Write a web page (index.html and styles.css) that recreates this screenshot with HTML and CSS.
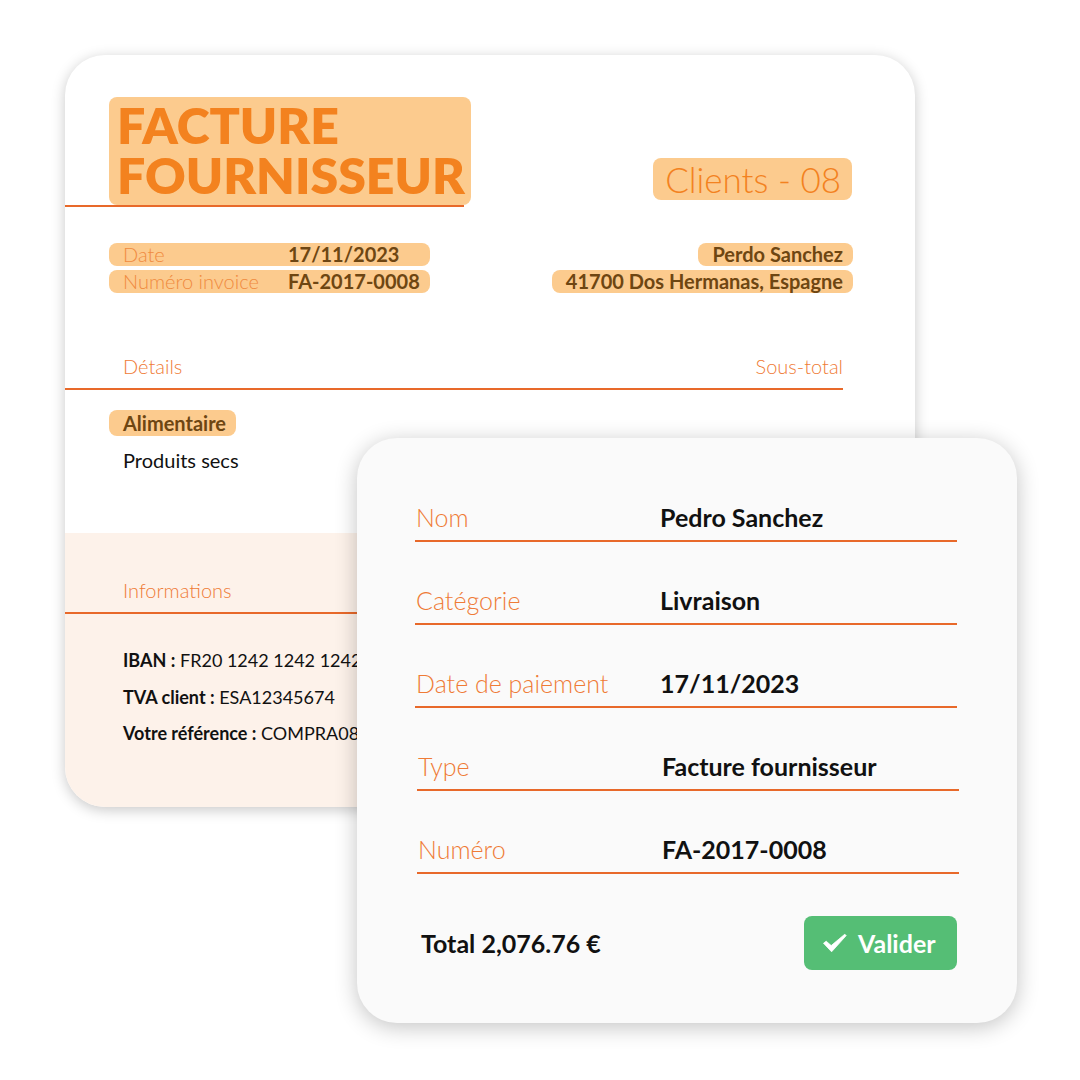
FILE: index.html
```html
<!DOCTYPE html>
<html lang="fr">
<head>
<meta charset="utf-8">
<title>Facture fournisseur</title>
<link rel="stylesheet" href="styles.css">
</head>
<body>
<div class="stage">
  <section class="doc">
    <div class="doc-top">
      <div class="head">
        <div class="title-wrap">
          <h1 class="title">FACTURE<br>FOURNISSEUR</h1>
        </div>
        <div class="clients">Clients - 08</div>
      </div>
      <div class="meta">
        <div class="meta-left">
          <div class="pill pill-kv"><span class="k">Date</span><span class="v">17/11/2023</span></div>
          <div class="pill pill-kv"><span class="k">Numéro invoice</span><span class="v">FA-2017-0008</span></div>
        </div>
        <div class="meta-right">
          <div class="pill pill-b">Perdo Sanchez</div>
          <div class="pill pill-b">41700 Dos Hermanas, Espagne</div>
        </div>
      </div>
      <div class="sec-head">
        <span>Détails</span><span>Sous-total</span>
      </div>
      <div class="cat"><span class="pill pill-b pill-tall">Alimentaire</span></div>
      <div class="item">Produits secs</div>
    </div>
    <div class="doc-bottom">
      <div class="sec-head"><span>Informations</span></div>
      <ul class="info">
        <li><b>IBAN :</b> FR20 1242 1242 1242 1242</li>
        <li><b>TVA client :</b> ESA12345674</li>
        <li><b>Votre référence :</b> COMPRA08</li>
      </ul>
    </div>
  </section>

  <section class="form">
    <div class="row"><span class="lbl">Nom</span><span class="val">Pedro Sanchez</span></div>
    <div class="row"><span class="lbl">Catégorie</span><span class="val">Livraison</span></div>
    <div class="row"><span class="lbl">Date de paiement</span><span class="val">17/11/2023</span></div>
    <div class="row row-shift"><span class="lbl">Type</span><span class="val">Facture fournisseur</span></div>
    <div class="row row-shift"><span class="lbl">Numéro</span><span class="val">FA-2017-0008</span></div>
    <div class="foot">
      <span class="total">Total 2,076.76 €</span>
      <button class="btn" type="button">
        <svg class="check" width="24" height="20" viewBox="0 0 24 20" aria-hidden="true"><path d="M0.5 10.2 L3.2 8.2 L8.2 12.6 L21.8 1.2 L23.2 2.6 L8.6 18.8 Z" fill="#ffffff" stroke="#ffffff" stroke-width="0.8" stroke-linejoin="round"/></svg>
        Valider
      </button>
    </div>
  </section>
</div>
</body>
</html>
```
FILE: styles.css
```css
* { box-sizing: border-box; }
html, body { margin: 0; padding: 0; background: #ffffff; }
body {
  font-family: Lato, "Open Sans", "Liberation Sans", sans-serif;
  width: 1080px;
  height: 1080px;
  overflow: hidden;
}
.stage {
  position: relative;
  width: 1080px;
  height: 1080px;
  padding: 55px 0 0 65px;
}

/* Back document */
.doc {
  width: 850px;
  height: 752px;
  border-radius: 40px;
  overflow: hidden;
  background: #ffffff;
  box-shadow: 0 3px 14px rgba(0, 0, 0, 0.22);
  display: flex;
  flex-direction: column;
}
.doc-top {
  padding: 42px 72px 0 0;
  height: 478px;
}
.head {
  display: flex;
  justify-content: space-between;
  align-items: flex-end;
}
.title-wrap {
  width: 399px;
  padding-left: 44px;
  border-bottom: 2px solid #e8692a;
}
.title {
  margin: 0;
  width: 362px;
  padding: 3px 0 5px 8px;
  background: #fccb8e;
  border-radius: 8px;
  color: #f3821f;
  font-weight: 800;
  font-size: 50px;
  line-height: 50px;
  letter-spacing: 0;
}
.clients {
  margin: 0 -9px 7px 0;
  background: #fccb8e;
  border-radius: 8px;
  padding: 0 11px 0 12px;
  height: 42px;
  line-height: 42px;
  font-size: 35px;
  font-weight: 300;
  color: #f3821f;
}
.meta {
  margin-top: 36px;
  padding-left: 44px;
  display: flex;
  justify-content: space-between;
  margin-right: -10px;
}
.meta-left, .meta-right {
  display: flex;
  flex-direction: column;
  gap: 4px;
}
.meta-right { align-items: flex-end; }
.pill {
  background: #fccb8e;
  border-radius: 8px;
  height: 23px;
  line-height: 23px;
  font-size: 20px;
}
.pill-kv {
  width: 321px;
  display: grid;
  grid-template-columns: 165px 1fr;
  padding-left: 14px;
}
.pill-kv .k { color: #f08a3e; font-weight: 300; }
.pill-kv .v { color: #6e4612; font-weight: 700; }
.pill-b {
  color: #6e4612;
  font-weight: 700;
  padding: 0 10px 0 14px;
}
.pill-tall {
  display: inline-block;
  height: 26px;
  line-height: 26px;
}
.sec-head {
  margin-top: 62px;
  width: 778px;
  display: flex;
  justify-content: space-between;
  padding: 0 0 10px 58px;
  border-bottom: 2px solid #e8692a;
  color: #ef7b36;
  font-weight: 300;
  font-size: 20px;
  line-height: 23px;
}
.cat {
  margin-top: 20px;
  padding-left: 44px;
  height: 26px;
}
.item {
  margin-top: 13px;
  padding-left: 58px;
  font-size: 20px;
  line-height: 22px;
  color: #111111;
}
.doc-bottom {
  flex: 1;
  background: #fdf2ea;
  padding-top: 46px;
}
.doc-bottom .sec-head { margin-top: 0; }
.info {
  list-style: none;
  margin: 28px 0 0;
  padding: 0 0 0 58px;
  font-size: 18px;
  line-height: 36.5px;
  color: #111111;
}
.info b { font-weight: 700; }

/* Front form card (overlaps the document) */
.form {
  position: absolute;
  left: 357px;
  top: 438px;
  width: 660px;
  height: 585px;
  border-radius: 40px;
  background: #fafafa;
  box-shadow: 0 4px 22px rgba(0, 0, 0, 0.24);
  padding: 64px 60px 0 58px;
}
.row {
  display: flex;
  align-items: baseline;
  height: 40px;
  padding: 0 0 8px 1px;
  border-bottom: 2px solid #e8692a;
  margin-bottom: 43px;
  font-size: 25px;
  line-height: 30px;
}
.row-shift { margin-left: 2px; margin-right: -2px; }
.lbl {
  width: 244px;
  color: #ef7b36;
  font-weight: 300;
}
.val {
  color: #111111;
  font-weight: 700;
}
.foot {
  margin-top: -1px;
  display: flex;
  justify-content: space-between;
  align-items: center;
  padding-left: 6px;
}
.total {
  font-size: 25px;
  font-weight: 700;
  color: #111111;
}
.btn {
  width: 153px;
  height: 54px;
  border: 0;
  border-radius: 8px;
  background: #55be75;
  color: #ffffff;
  font-family: inherit;
  font-weight: 700;
  font-size: 25px;
  display: flex;
  align-items: center;
  gap: 11px;
  padding: 0 0 0 19px;
}
.check { display: block; }
```
